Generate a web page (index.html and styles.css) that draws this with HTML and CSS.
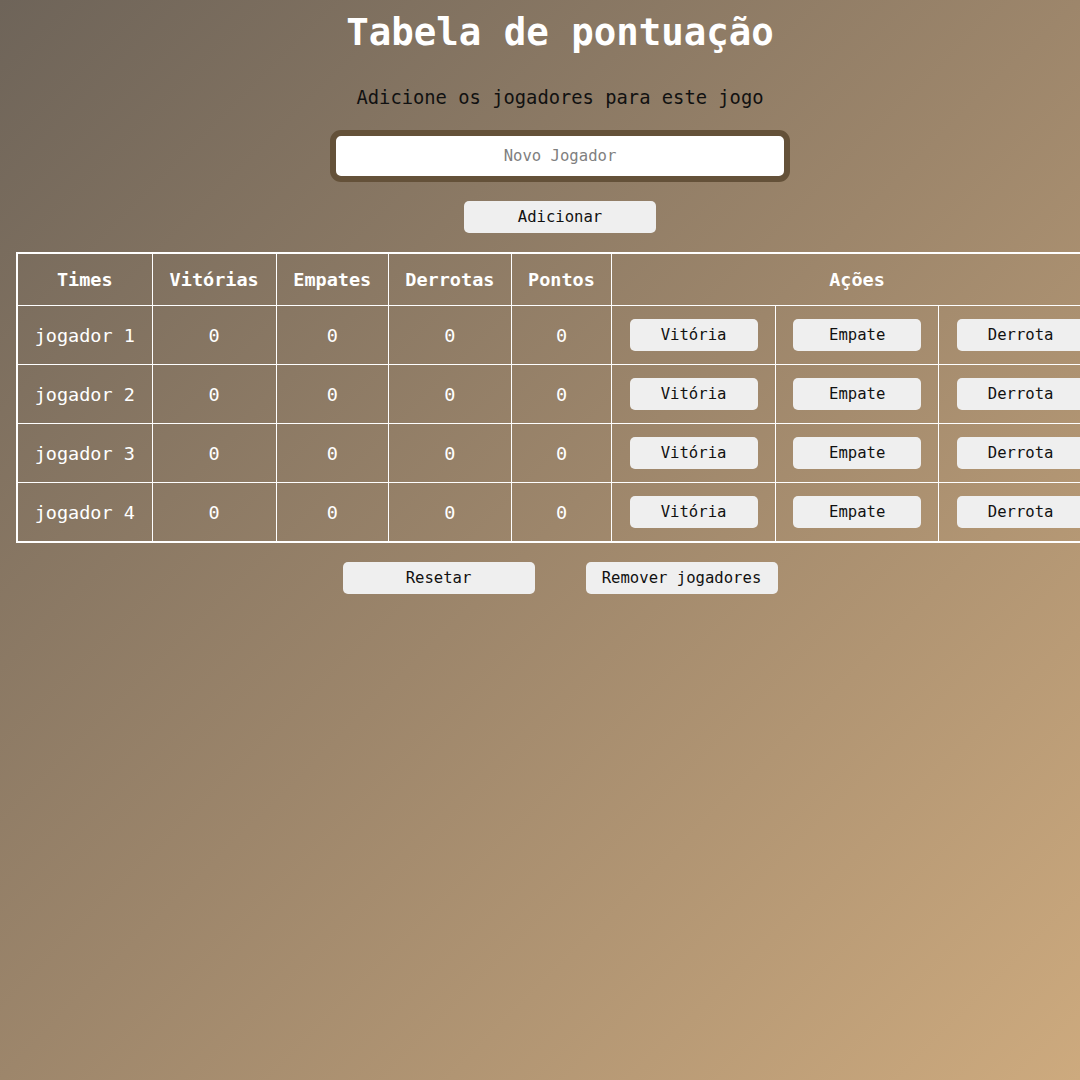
FILE: index.html
```html
<!DOCTYPE html>
<html lang="pt">
<head>
<meta charset="utf-8">
<title>Tabela de pontuação</title>
<link rel="stylesheet" href="styles.css">
</head>
<body>
<main class="page">
  <h1 class="title">Tabela de pontuação</h1>
  <p class="subtitle">Adicione os jogadores para este jogo</p>
  <input class="player-input" type="text" placeholder="Novo Jogador">
  <div class="add-row"><button class="btn btn-wide">Adicionar</button></div>
  <table class="score-table">
    <colgroup>
      <col class="c-team"><col class="c-win"><col class="c-draw"><col class="c-loss"><col class="c-pts"><col class="c-act"><col class="c-act2"><col class="c-act">
    </colgroup>
    <thead>
      <tr><th>Times</th><th>Vitórias</th><th>Empates</th><th>Derrotas</th><th>Pontos</th><th colspan="3">Ações</th></tr>
    </thead>
    <tbody>
      <tr><td>jogador 1</td><td>0</td><td>0</td><td>0</td><td>0</td><td><button class="btn btn-act">Vitória</button></td><td><button class="btn btn-act">Empate</button></td><td><button class="btn btn-act">Derrota</button></td></tr>
      <tr><td>jogador 2</td><td>0</td><td>0</td><td>0</td><td>0</td><td><button class="btn btn-act">Vitória</button></td><td><button class="btn btn-act">Empate</button></td><td><button class="btn btn-act">Derrota</button></td></tr>
      <tr><td>jogador 3</td><td>0</td><td>0</td><td>0</td><td>0</td><td><button class="btn btn-act">Vitória</button></td><td><button class="btn btn-act">Empate</button></td><td><button class="btn btn-act">Derrota</button></td></tr>
      <tr><td>jogador 4</td><td>0</td><td>0</td><td>0</td><td>0</td><td><button class="btn btn-act">Vitória</button></td><td><button class="btn btn-act">Empate</button></td><td><button class="btn btn-act">Derrota</button></td></tr>
    </tbody>
  </table>
  <div class="bottom-row">
    <button class="btn btn-wide">Resetar</button>
    <button class="btn btn-wide">Remover jogadores</button>
  </div>
</main>
</body>
</html>
```

FILE: styles.css
```css
html {
  min-height: 100%;
  background: linear-gradient(to bottom right, #6e6459 0%, #9d866b 50%, #cdaa7e 100%);
  overflow: hidden;
}
body {
  margin: 0;
  min-height: 1080px;
  font-family: "DejaVu Sans Mono", "Liberation Mono", monospace;
  overflow: hidden;
}
.page {
  width: 1088px;
  margin-left: 16px;
  padding-top: 10px;
  display: flex;
  flex-direction: column;
  align-items: center;
}
.title {
  margin: 0;
  font-size: 37.4px;
  line-height: 44px;
  font-weight: bold;
  color: #ffffff;
}
.subtitle {
  margin: 32px 0 0;
  font-size: 18.8px;
  line-height: 24px;
  color: #111111;
}
.player-input {
  margin-top: 20px;
  box-sizing: border-box;
  width: 460px;
  height: 52px;
  border: 6px solid #645139;
  border-radius: 11px;
  background: #ffffff;
  text-align: center;
  font-family: inherit;
  font-size: 15.6px;
  color: #222;
  outline: none;
  padding: 0;
}
.player-input::placeholder {
  color: #808080;
}
.add-row {
  margin-top: 19px;
}
.btn {
  font-family: "DejaVu Sans Mono", "Liberation Mono", monospace;
  font-size: 15.6px;
  color: #111111;
  background: #efefef;
  border: none;
  border-radius: 5px;
  height: 32px;
  padding: 0;
  cursor: pointer;
}
.btn-wide {
  width: 192px;
}
.btn-act {
  width: 128px;
}
.score-table {
  margin-top: 19px;
  width: 1088px;
  table-layout: fixed;
  border-collapse: collapse;
  border: 2px solid #ffffff;
  color: #ffffff;
  font-size: 18.5px;
}
.c-team { width: 135px; }
.c-win { width: 124px; }
.c-draw { width: 112px; }
.c-loss { width: 123px; }
.c-pts { width: 100px; }
.c-act { width: 164px; }
.c-act2 { width: 163px; }
.score-table th,
.score-table td {
  border: 1px solid #ffffff;
  padding: 0;
  text-align: center;
  vertical-align: middle;
}
.score-table th {
  height: 51px;
  font-weight: bold;
}
.score-table td {
  height: 58px;
}
.bottom-row {
  margin-top: 19px;
  display: flex;
  gap: 51px;
}
```
